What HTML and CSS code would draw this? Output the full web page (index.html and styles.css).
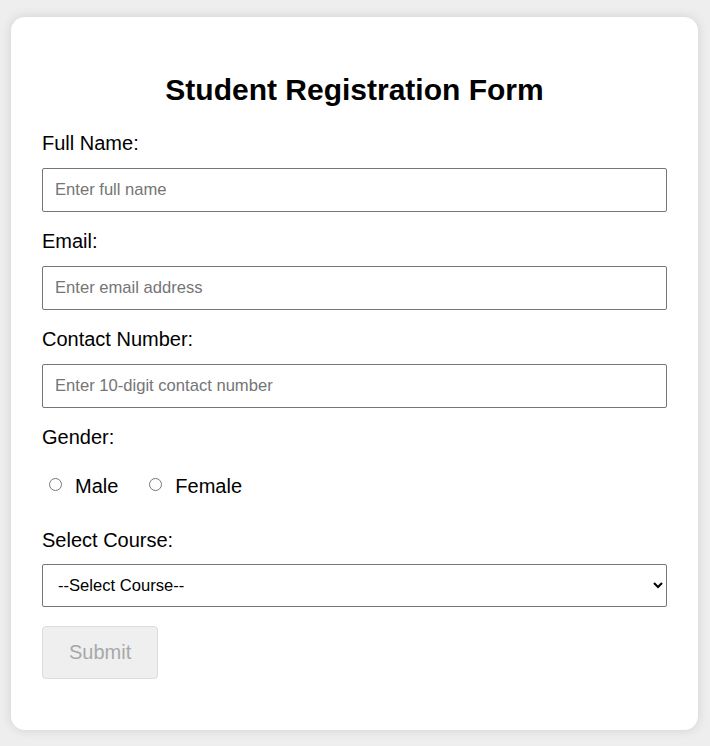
FILE: index.html
```html
<!DOCTYPE html>
<html lang="en">
<head>
<meta charset="utf-8">
<title>Student Registration Form</title>
<link rel="stylesheet" href="styles.css">
</head>
<body>
<form class="card" onsubmit="return false">
  <h2 class="title">Student Registration Form</h2>

  <label class="field-label" for="name">Full Name:</label>
  <input class="field" type="text" id="name" placeholder="Enter full name">

  <label class="field-label" for="email">Email:</label>
  <input class="field" type="email" id="email" placeholder="Enter email address">

  <label class="field-label" for="phone">Contact Number:</label>
  <input class="field" type="tel" id="phone" placeholder="Enter 10-digit contact number">

  <label class="field-label">Gender:</label>
  <div class="radio-group">
    <label class="radio-option"><input type="radio" name="gender" value="male" class="radio"> Male</label>
    <label class="radio-option"><input type="radio" name="gender" value="female" class="radio"> Female</label>
  </div>

  <label class="field-label field-label-tight" for="course">Select Course:</label>
  <select class="field select" id="course">
    <option>--Select Course--</option>
    <option>B.Tech</option>
    <option>BCA</option>
    <option>MCA</option>
  </select>

  <button class="submit" type="submit" disabled>Submit</button>
</form>
</body>
</html>
```

FILE: styles.css
```css
html, body {
  margin: 0;
  padding: 0;
}

body {
  background: #eeeeee;
  font-family: "Liberation Sans", Arial, sans-serif;
  color: #000;
  padding: 17px 12px 17px 11px;
}

.card {
  background: #ffffff;
  border-radius: 14px;
  box-shadow: 0 0 12px rgba(0, 0, 0, 0.12);
  padding: 31px 31px 31px;
  display: flex;
  flex-direction: column;
  align-items: stretch;
}

.title {
  font-size: 30px;
  font-weight: bold;
  text-align: center;
  margin: 25px 0 25px;
}

.field-label {
  display: block;
  font-size: 20px;
  line-height: 22px;
  margin: 0 0 14px;
}

.field-label-tight {
  margin-bottom: 13px;
}

.field {
  box-sizing: border-box;
  width: 100%;
  font-family: "Liberation Sans", Arial, sans-serif;
  font-size: 16.6px;
  line-height: 18px;
  padding: 12px;
  border: 1px solid #767676;
  border-radius: 2px;
  margin: 0 0 18px;
  color: #000;
  background: #fff;
}

.field::placeholder {
  color: #757575;
}

.select {
  height: 43px;
  padding: 10px 8px 10px 11px;
  margin-bottom: 19px;
}

.radio-group {
  display: flex;
  gap: 24px;
  align-items: center;
  margin: 13px 0 31px;
  height: 23px;
}

.radio-option {
  font-size: 20px;
  display: flex;
  align-items: center;
  gap: 13px;
}

.radio {
  width: 13px;
  height: 13px;
  margin: 0 0 4px 7px;
}

.submit {
  align-self: flex-start;
  font-family: "Liberation Sans", Arial, sans-serif;
  font-size: 20px;
  padding: 14px 26px;
  color: #a8a8a8;
  background: #efefef;
  border: 1px solid #dcdcdc;
  border-radius: 4px;
  margin-bottom: 20px;
}
```
